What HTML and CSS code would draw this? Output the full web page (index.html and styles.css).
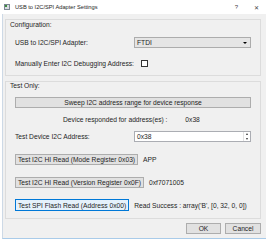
FILE: index.html
```html
<!DOCTYPE html>
<html lang="en">
<head>
    <meta charset="UTF-8">
    <title>USB to I2C/SPI Adapter Settings</title>
    <link rel="stylesheet" href="styles.css">
</head>
<body>
    <div class="titlebar">
        <svg class="app-icon" viewBox="0 0 6 6">
            <rect x="0.5" y="0.5" width="5" height="5" fill="#d8dde2" stroke="#7d8894"/>
            <rect x="1" y="1" width="2" height="2" fill="#3c8a3c"/>
        </svg>
        <span class="title">USB to I2C/SPI Adapter Settings</span>
        <span class="help">?</span>
        <span class="close">✕</span>
    </div>

    <div class="dialog">
        <div class="group config">
            <div class="group-title">Configuration:</div>
            <div class="form-row first">
                <label>USB to I2C/SPI Adapter:</label>
                <div class="combo">
                    <span>FTDI</span>
                    <span class="arrow"></span>
                </div>
            </div>
            <div class="form-row check-row">
                <label>Manually Enter I2C Debugging Address:</label>
                <span class="checkbox"></span>
            </div>
        </div>

        <div class="group test">
            <div class="group-title">Test Only:</div>
            <button class="btn sweep">Sweep I2C address range for device response</button>
            <div class="responded">
                <span>Device responded for address(es) :</span>
                <span class="found">0x38</span>
            </div>
            <div class="form-row spin-row">
                <label>Test Device I2C Address:</label>
                <div class="spin">
                    <span>0x38</span>
                    <span class="spin-arrows">
                        <span class="up"></span>
                        <span class="down"></span>
                    </span>
                </div>
            </div>
            <div class="test-row">
                <button class="btn">Test I2C HI Read (Mode Register 0x03)</button>
                <span class="result">APP</span>
            </div>
            <div class="test-row">
                <button class="btn">Test I2C HI Read (Version Register 0x0F)</button>
                <span class="result">0xf7071005</span>
            </div>
            <div class="test-row last">
                <button class="btn focused">Test SPI Flash Read (Address 0x00)</button>
                <span class="result">Read Success : array('B', [0, 32, 0, 0])</span>
            </div>
        </div>

        <div class="actions">
            <button class="btn ok">OK</button>
            <button class="btn cancel">Cancel</button>
        </div>
    </div>
</body>
</html>
```

FILE: styles.css
```css
* {
    box-sizing: border-box;
}
body {
    margin: 0;
    width: 266px;
    height: 240px;
    overflow: hidden;
    background-color: #fff;
    font-family: "Liberation Sans", Arial, sans-serif;
    font-size: 6.7px;
    color: #1e1e1e;
}
.titlebar {
    height: 14px;
    background-color: #fff;
    display: flex;
    align-items: center;
    padding-left: 4px;
}
.app-icon {
    width: 6px;
    height: 6px;
    margin-right: 5px;
}
.title {
    flex: 1;
    font-size: 5.7px;
}
.help {
    font-size: 6px;
    color: #444;
    margin-right: 16px;
}
.close {
    font-size: 6px;
    color: #444;
    margin-right: 7px;
}
.dialog {
    height: 225px;
    margin-left: 2px;
    padding: 5px 5px 0 2px;
    background-color: #f0f0f0;
    border-left: 1px solid #cdd9e6;
    border-bottom: 1px solid #a9cbe9;
}
.group {
    border: 1px solid #dcdcdc;
    padding: 0 9px;
}
.group-title {
    height: 9px;
    line-height: 9px;
    margin-left: -5px;
}
.config {
    height: 57px;
}
.form-row {
    display: grid;
    grid-template-columns: 119px 1fr;
    align-items: center;
    height: 11px;
}
.form-row.first {
    margin-top: 8px;
}
.check-row {
    margin-top: 10px;
}
.combo {
    height: 11px;
    background-color: #e5e5e5;
    border: 1px solid #acacac;
    display: flex;
    align-items: center;
    justify-content: space-between;
    padding: 0 3px 0 2px;
}
.arrow {
    width: 0;
    height: 0;
    border-left: 2px solid transparent;
    border-right: 2px solid transparent;
    border-top: 2px solid #000;
}
.checkbox {
    width: 7px;
    height: 7px;
    margin-left: 7px;
    background-color: #fff;
    border: 1px solid #333;
}
.test {
    height: 138px;
    margin-top: 5px;
}
.test .group-title {
    margin-top: -1px;
}
.btn {
    display: block;
    height: 11px;
    padding: 0 2px;
    font-family: inherit;
    font-size: 6.7px;
    line-height: 9px;
    color: #1e1e1e;
    background-color: #e1e1e1;
    border: 1px solid #adadad;
    border-radius: 0;
    white-space: nowrap;
}
.btn.focused {
    height: 12px;
    background-color: #e5f1fb;
    border-color: #0078d7;
}
.sweep {
    width: 100%;
    margin-top: 7px;
}
.responded {
    height: 9px;
    line-height: 9px;
    margin-top: 7px;
    padding-left: 48px;
}
.found {
    margin-left: 16px;
}
.spin-row {
    margin-top: 7px;
}
.spin {
    height: 11px;
    background-color: #fff;
    border: 1px solid #abadb3;
    display: flex;
    align-items: center;
    justify-content: space-between;
    padding-left: 2px;
}
.spin-arrows {
    width: 7px;
    height: 9px;
    display: flex;
    flex-direction: column;
    align-items: center;
    justify-content: space-around;
    border-left: 1px solid #e3e3e3;
}
.spin-arrows .up {
    border-left: 1.5px solid transparent;
    border-right: 1.5px solid transparent;
    border-bottom: 2px solid #333;
}
.spin-arrows .down {
    border-left: 1.5px solid transparent;
    border-right: 1.5px solid transparent;
    border-top: 2px solid #333;
}
.test-row {
    display: flex;
    align-items: center;
    gap: 5px;
    margin-top: 12px;
}
.test-row.last {
    margin-top: 11px;
}
.actions {
    display: flex;
    justify-content: flex-end;
    gap: 4px;
    margin-top: 4px;
}
.ok {
    width: 35px;
}
.cancel {
    width: 36px;
}
```
